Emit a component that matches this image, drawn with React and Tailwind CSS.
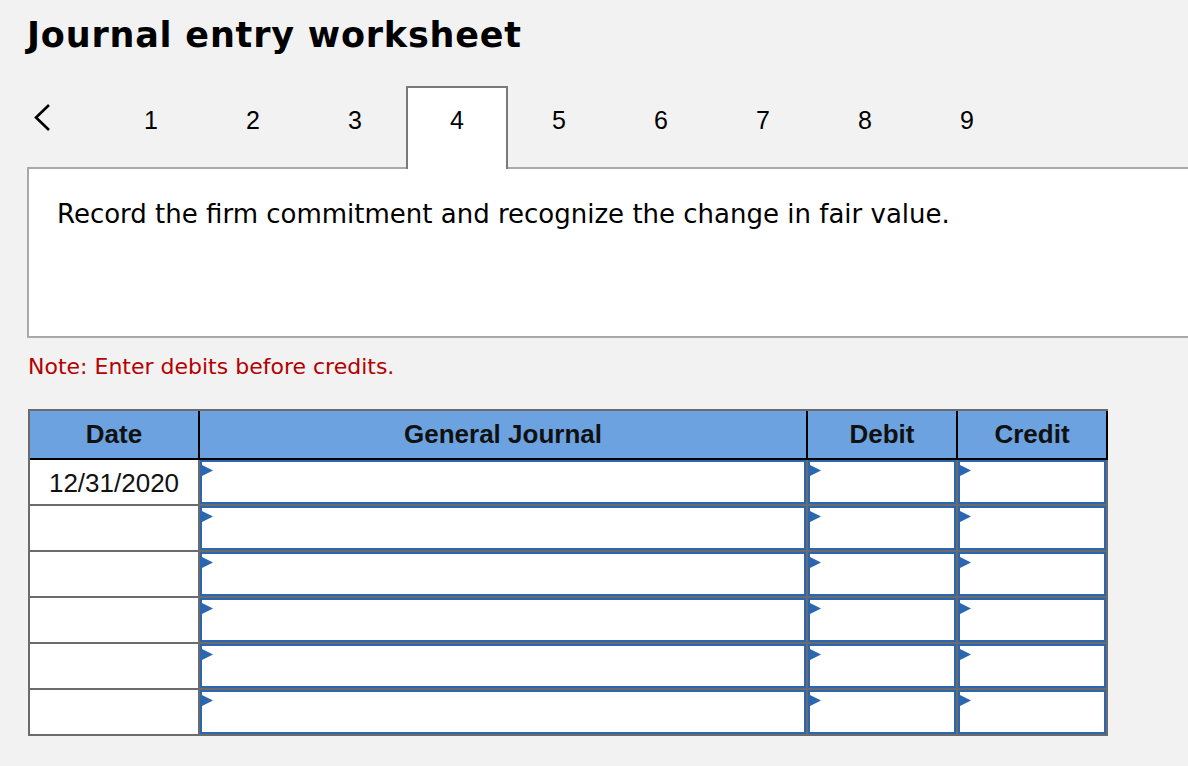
import React from "react";

const ROWS = ["12/31/2020", "", "", "", "", ""];
const TABS = [1, 2, 3, 4, 5, 6, 7, 8, 9];

function Flag() {
  return (
    <svg className="absolute left-0 top-[3px]" width="11" height="11" viewBox="0 0 11 11">
      <polygon points="0,0 11,5.5 0,11" fill="#2b67b1" />
    </svg>
  );
}

function InputCell() {
  return (
    <div className="relative h-[44px] bg-white border-2 border-[#2b67b1]">
      <Flag />
    </div>
  );
}

export default function App() {
  return (
    <div className="min-h-[766px] w-[1188px] overflow-hidden bg-[#f2f2f2] pt-[14px]">
      <h1
        className="ml-[27px] text-[35px] font-bold leading-[42px] tracking-[0.8px] text-black"
        style={{ fontFamily: '"DejaVu Sans", Verdana, sans-serif' }}
      >
        Journal entry worksheet
      </h1>

      <div
        className="mt-[30px] flex items-end"
        style={{ fontFamily: '"Liberation Sans", Arial, sans-serif' }}
      >
        <div className="ml-[28px] flex h-[81px] w-[72px] items-start pt-[16px]">
          <svg width="24" height="32" viewBox="0 0 24 32" className="ml-[3px]">
            <polyline points="18,3 5,15.5 18,28" fill="none" stroke="#000" strokeWidth="2.6" />
          </svg>
        </div>
        {TABS.map((t) =>
          t === 4 ? (
            <div
              key={t}
              className="relative z-10 mb-[-2px] flex h-[83px] w-[102px] justify-center border-2 border-b-0 border-[#7a7a7a] bg-white pt-[17px] text-[25px] leading-[30px] text-black"
            >
              {t}
            </div>
          ) : (
            <div
              key={t}
              className="flex h-[81px] w-[102px] justify-center pt-[19px] text-[25px] leading-[30px] text-black"
            >
              {t}
            </div>
          )
        )}
      </div>

      <div
        className="ml-[27px] mr-[-10px] h-[171px] border-2 border-[#a9a9a9] bg-white pl-[28px] pt-[29px] text-[26px] leading-[32px] text-black"
        style={{ fontFamily: '"DejaVu Sans", Verdana, sans-serif' }}
      >
        Record the firm commitment and recognize the change in fair value.
      </div>

      <div
        className="ml-[28px] mt-[15px] text-[22px] leading-[28px] text-[#b30000]"
        style={{ fontFamily: '"DejaVu Sans", Verdana, sans-serif' }}
      >
        Note: Enter debits before credits.
      </div>

      <div
        className="ml-[28px] mt-[28px] w-[1080px] border-l-2 border-t-2 border-b-2 border-[#6b6b6b]"
        style={{ fontFamily: '"Liberation Sans", Arial, sans-serif' }}
      >
        <div className="grid grid-cols-[168px_606px_148px_148px] gap-x-[2px] bg-black pb-[2px] pr-[2px]">
          {["Date", "General Journal", "Debit", "Credit"].map((h) => (
            <div
              key={h}
              className="flex h-[47px] items-center justify-center bg-[#6ba2df] text-[26px] font-bold text-[#111]"
            >
              {h}
            </div>
          ))}
        </div>
        <div className="grid grid-cols-[168px_606px_148px_148px] gap-[2px] bg-[#6b6b6b] pr-[2px]">
          {ROWS.map((d, i) => (
            <React.Fragment key={i}>
              <div className="flex h-[44px] items-center justify-center bg-white pt-[2px] text-[26px] text-[#111]">
                {d}
              </div>
              <InputCell />
              <InputCell />
              <InputCell />
            </React.Fragment>
          ))}
        </div>
      </div>
    </div>
  );
}
